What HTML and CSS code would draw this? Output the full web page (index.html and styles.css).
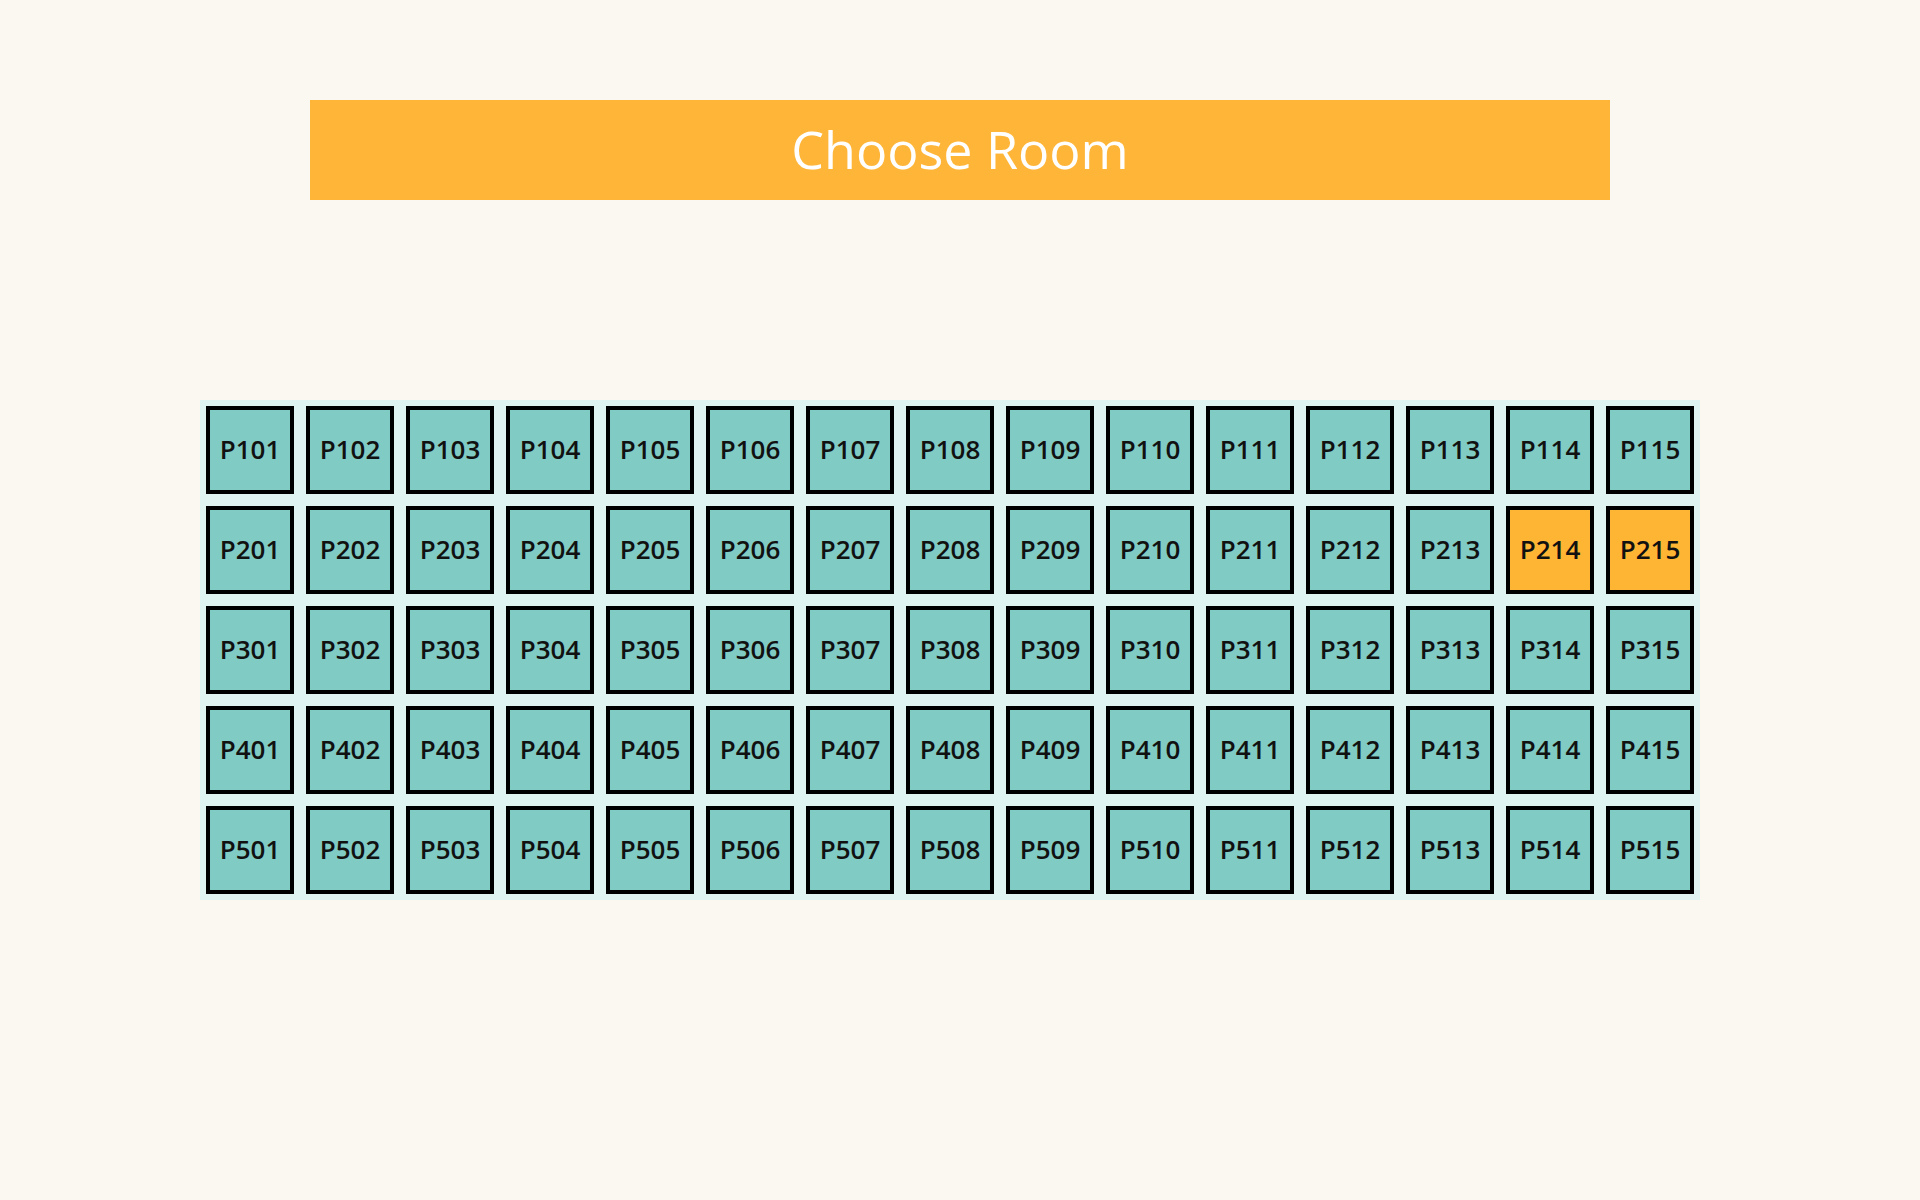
FILE: index.html
```html
<!DOCTYPE html>
<html>
<head>
<meta charset="utf-8">
<link rel="stylesheet" href="styles.css">
</head>
<body>
<div class="page">
  <h1 class="title">Choose Room</h1>
  <div class="grid-wrap">
  <div class="grid" id="grid">
    <div class="room">P101</div><div class="room">P102</div><div class="room">P103</div><div class="room">P104</div><div class="room">P105</div><div class="room">P106</div><div class="room">P107</div><div class="room">P108</div><div class="room">P109</div><div class="room">P110</div><div class="room">P111</div><div class="room">P112</div><div class="room">P113</div><div class="room">P114</div><div class="room">P115</div>
    <div class="room">P201</div><div class="room">P202</div><div class="room">P203</div><div class="room">P204</div><div class="room">P205</div><div class="room">P206</div><div class="room">P207</div><div class="room">P208</div><div class="room">P209</div><div class="room">P210</div><div class="room">P211</div><div class="room">P212</div><div class="room">P213</div><div class="room selected">P214</div><div class="room selected">P215</div>
    <div class="room">P301</div><div class="room">P302</div><div class="room">P303</div><div class="room">P304</div><div class="room">P305</div><div class="room">P306</div><div class="room">P307</div><div class="room">P308</div><div class="room">P309</div><div class="room">P310</div><div class="room">P311</div><div class="room">P312</div><div class="room">P313</div><div class="room">P314</div><div class="room">P315</div>
    <div class="room">P401</div><div class="room">P402</div><div class="room">P403</div><div class="room">P404</div><div class="room">P405</div><div class="room">P406</div><div class="room">P407</div><div class="room">P408</div><div class="room">P409</div><div class="room">P410</div><div class="room">P411</div><div class="room">P412</div><div class="room">P413</div><div class="room">P414</div><div class="room">P415</div>
    <div class="room">P501</div><div class="room">P502</div><div class="room">P503</div><div class="room">P504</div><div class="room">P505</div><div class="room">P506</div><div class="room">P507</div><div class="room">P508</div><div class="room">P509</div><div class="room">P510</div><div class="room">P511</div><div class="room">P512</div><div class="room">P513</div><div class="room">P514</div><div class="room">P515</div>
  </div>
  </div>
</div>
</body>
</html>
```
FILE: styles.css
```css
html, body {
  margin: 0;
  padding: 0;
  background: #fbf8f1;
  font-family: "Open Sans", "Noto Sans", sans-serif;
}
.page {
  display: flex;
  flex-direction: column;
  align-items: center;
  padding-top: 100px;
  height: 1100px;
}
.title {
  margin: 0;
  box-sizing: border-box;
  width: 1300px;
  height: 100px;
  padding-bottom: 4px;
  background: #ffb538;
  color: #ffffff;
  font-weight: 400;
  font-size: 52px;
  display: flex;
  align-items: center;
  justify-content: center;
}
.grid-wrap {
  align-self: stretch;
  margin-top: 200px;
  padding-left: 200px;
  display: flex;
}
.grid {
  display: grid;
  grid-template-columns: repeat(15, 100px);
  grid-auto-rows: 100px;
  background: #e0f5f1;
}
.room {
  margin: 6px;
  box-sizing: border-box;
  width: 88px;
  height: 88px;
  padding-bottom: 2px;
  border: 4px solid #000;
  background: #80cbc4;
  display: flex;
  align-items: center;
  justify-content: center;
  font-size: 26px;
  font-weight: 600;
  color: #111;
}
.room.selected {
  background: #ffb534;
}
```
